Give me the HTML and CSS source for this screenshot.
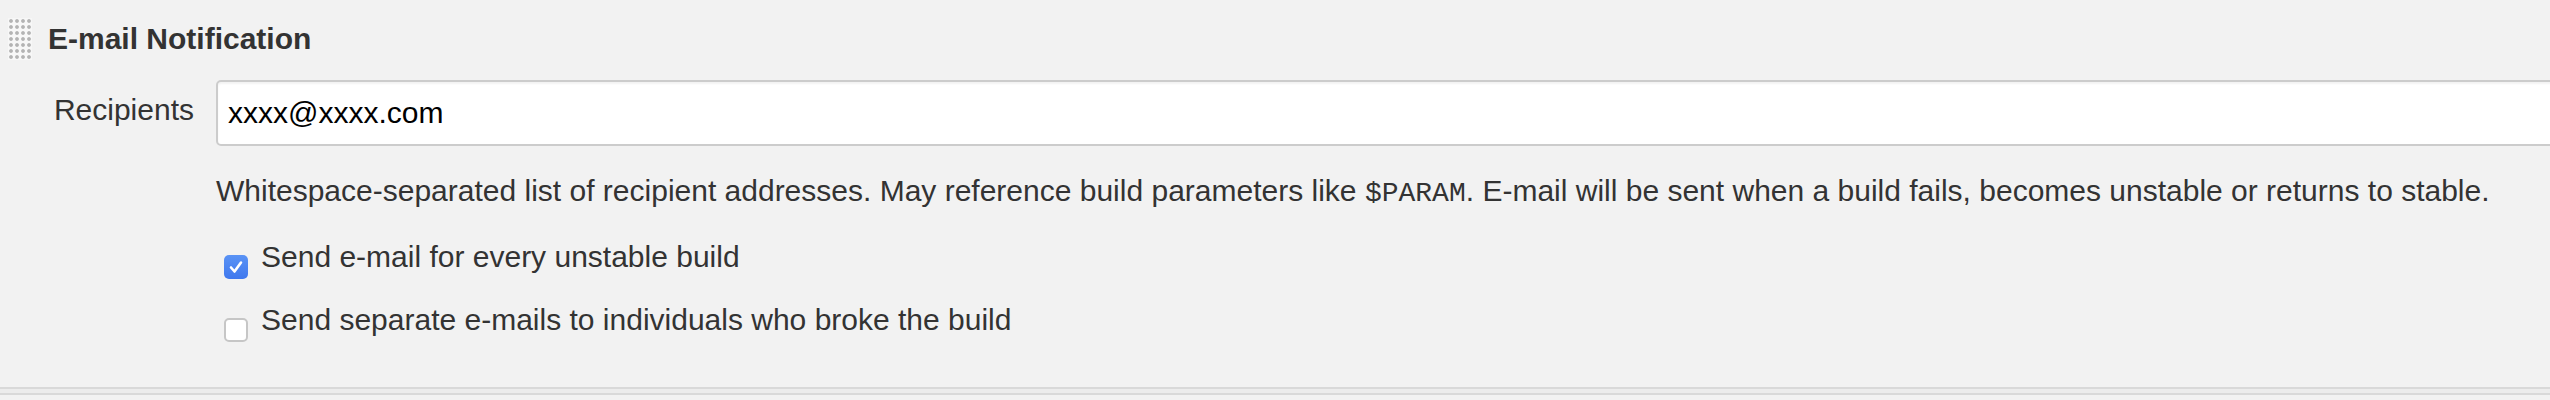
FILE: index.html
```html
<!DOCTYPE html>
<html lang="en">
<head>
<meta charset="utf-8">
<title>E-mail Notification</title>
<link rel="stylesheet" href="styles.css">
</head>
<body>
<div class="section">
  <div class="section-header">
    <span class="handle"></span>
    <span class="section-title">E-mail Notification</span>
  </div>
  <div class="form-grid">
    <label class="field-label" for="recipients">Recipients</label>
    <div class="field-body">
      <input class="text-input" id="recipients" type="text" value="xxxx@xxxx.com">
      <div class="help">Whitespace-separated list of recipient addresses. May reference build parameters like <code class="mono">$PARAM</code>. E-mail will be sent when a build fails, becomes unstable or returns to stable.</div>
      <div class="check-row">
        <span class="checkbox checked"><svg viewBox="0 0 24 24" width="24" height="24"><path d="M7 12.5 L10.5 16.5 L17 7.5" fill="none" stroke="#fff" stroke-width="2.6" stroke-linecap="round" stroke-linejoin="round"/></svg></span>
        <span class="check-label">Send e-mail for every unstable build</span>
      </div>
      <div class="check-row">
        <span class="checkbox"></span>
        <span class="check-label">Send separate e-mails to individuals who broke the build</span>
      </div>
    </div>
  </div>
  <div class="section-end"></div>
</div>
</body>
</html>
```
FILE: styles.css
```css
html, body {
  margin: 0;
  padding: 0;
  background: #f2f2f2;
  overflow: hidden;
}
body {
  font-family: "Liberation Sans", Arial, Helvetica, sans-serif;
  font-size: 30px;
  color: #333;
}
.section {
  width: 2550px;
}
.section-header {
  display: flex;
  align-items: center;
  padding: 18px 0 0 8px;
  gap: 16px;
  height: 42px;
}
.handle {
  width: 24px;
  height: 42px;
  background-color: #f7f7f7;
  background-image: radial-gradient(circle at 3px 3px, #b3b3b3 0, #b3b3b3 1.4px, rgba(179,179,179,0) 2.3px);
  background-size: 6px 6px;
  flex: none;
}
.section-title {
  font-weight: bold;
  line-height: 42px;
  color: #333;
}
.form-grid {
  display: grid;
  grid-template-columns: 194px 1fr;
  column-gap: 22px;
  margin-top: 20px;
}
.field-label {
  text-align: right;
  line-height: 34px;
  padding-top: 13px;
  color: #333;
}
.field-body {
  display: flex;
  flex-direction: column;
  min-width: 0;
}
.text-input {
  box-sizing: border-box;
  height: 66px;
  width: calc(100% + 20px);
  margin: 0;
  border: 2px solid #cccccc;
  border-radius: 5px;
  box-shadow: inset 0 2px 2px rgba(0,0,0,0.05);
  background: #fff;
  padding: 0 10px;
  font-family: "Liberation Sans", Arial, Helvetica, sans-serif;
  font-size: 30px;
  color: #000;
  outline: none;
}
.help {
  margin-top: 28px;
  line-height: 34px;
  color: #333;
  white-space: nowrap;
}
.mono {
  font-family: "Liberation Mono", "Courier New", monospace;
  font-size: 28px;
  color: #333;
}
.check-row {
  display: flex;
  align-items: flex-start;
  height: 34px;
  margin-top: 29px;
  padding-left: 8px;
  gap: 13px;
  line-height: 34px;
}
.checkbox {
  box-sizing: border-box;
  width: 24px;
  height: 24px;
  margin-top: 15px;
  border: 2px solid #c6c6c6;
  border-radius: 5px;
  background: #fff;
  flex: none;
  display: flex;
}
.checkbox.checked {
  border: none;
  background: linear-gradient(#5a93f5, #3f78ee);
}
.check-label {
  color: #333;
  white-space: nowrap;
}
.section-end {
  margin-top: 50px;
  height: 4px;
  border-top: 2px solid #d9d9d9;
  border-bottom: 2px solid #d9d9d9;
  background: #ececec;
}
```
